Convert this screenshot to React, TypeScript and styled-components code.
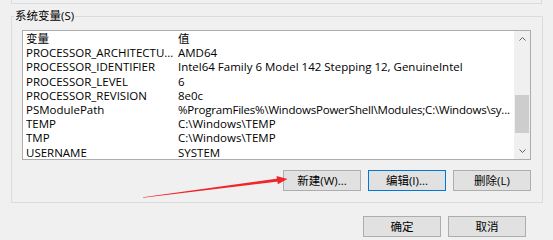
import React from 'react';
import styled, { createGlobalStyle } from 'styled-components';

const Global = createGlobalStyle`
  body {
    margin: 0;
    background: #f0f0f0;
    font-family: "Open Sans", "Noto Sans CJK SC", sans-serif;
    font-size: 11.5px;
    color: #000;
  }
`;

const Page = styled.div`
  position: relative;
  width: 553px;
  height: 240px;
  overflow: hidden;
  background: #f0f0f0;
`;

const UserBox = styled.div`
  box-sizing: border-box;
  margin-left: 11px;
  width: 531px;
  height: 4px;
  border: 1px solid #dcdcdc;
  border-top: none;
`;

const Group = styled.div`
  box-sizing: border-box;
  margin: 12px 0 0 11px;
  width: 532px;
  height: 187px;
  border: 1px solid #dcdcdc;
  padding: 0 11px 11px 10px;
  display: flex;
  flex-direction: column;
`;

const Legend = styled.div`
  align-self: flex-start;
  margin: -8px 0 0 -8px;
  padding: 0 1px;
  height: 14px;
  line-height: 14px;
  background: #f0f0f0;
`;

const ListBox = styled.div`
  box-sizing: border-box;
  margin-top: 7px;
  height: 130px;
  border: 1px solid #adadad;
  background: #fff;
  display: flex;
`;

const Rows = styled.div`
  flex: 1;
  padding: 1px 0 0 3px;
  overflow: hidden;
`;

const Row = styled.div`
  display: flex;
  height: 14.2px;
  line-height: 14.2px;
  white-space: nowrap;
`;

const Name = styled.span`
  width: 152px;
  flex: none;
  overflow: hidden;
`;

const Value = styled.span<{ $tight?: boolean }>`
  letter-spacing: ${p => (p.$tight ? '-0.2px' : 'normal')};
`;

const Scrollbar = styled.div`
  width: 16px;
  flex: none;
  background: #f0f0f0;
  display: flex;
  flex-direction: column;
`;

const Arrow = styled.div`
  height: 16px;
  display: flex;
  align-items: center;
  justify-content: center;
`;

const Track = styled.div`
  flex: 1;
  display: flex;
  flex-direction: column;
`;

const Thumb = styled.div`
  margin: 48px 1px 0 1px;
  height: 38px;
  background: #cdcdcd;
`;

const ButtonRow = styled.div<{ $mt: number; $pr?: number }>`
  display: flex;
  justify-content: flex-end;
  gap: 7px;
  margin-top: ${p => p.$mt}px;
  padding-right: ${p => p.$pr ?? 0}px;
`;

const Button = styled.div<{ $focused?: boolean }>`
  box-sizing: border-box;
  width: 78px;
  height: 21px;
  border: 1px solid ${p => (p.$focused ? '#0078d7' : '#adadad')};
  background: #e1e1e1;
  display: flex;
  align-items: center;
  justify-content: center;
  line-height: 1;
`;

const Overlay = styled.svg`
  position: absolute;
  left: 0;
  top: 0;
  pointer-events: none;
`;

const rows: [string, string][] = [
  ['变量', '值'],
  ['PROCESSOR_ARCHITECTU...', 'AMD64'],
  ['PROCESSOR_IDENTIFIER', 'Intel64 Family 6 Model 142 Stepping 12, GenuineIntel'],
  ['PROCESSOR_LEVEL', '6'],
  ['PROCESSOR_REVISION', '8e0c'],
  ['PSModulePath', '%ProgramFiles%\\WindowsPowerShell\\Modules;C:\\Windows\\sy...'],
  ['TEMP', 'C:\\Windows\\TEMP'],
  ['TMP', 'C:\\Windows\\TEMP'],
  ['USERNAME', 'SYSTEM'],
];

const Chevron = ({ up }: { up?: boolean }) => (
  <svg width="7" height="4" viewBox="0 0 7 4">
    <path d={up ? 'M0.5 3.5 L3.5 0.5 L6.5 3.5' : 'M0.5 0.5 L3.5 3.5 L6.5 0.5'} fill="none" stroke="#606060" strokeWidth="1" />
  </svg>
);

export default function App() {
  return (
    <Page>
      <Global />
      <UserBox />
      <Group>
        <Legend>系统变量(S)</Legend>
        <ListBox>
          <Rows>
            {rows.map(([n, v]) => (
              <Row key={n}>
                <Name>{n}</Name>
                <Value $tight={v.length > 55}>{v}</Value>
              </Row>
            ))}
          </Rows>
          <Scrollbar>
            <Arrow><Chevron up /></Arrow>
            <Track><Thumb /></Track>
            <Arrow><Chevron /></Arrow>
          </Scrollbar>
        </ListBox>
        <ButtonRow $mt={10}>
          <Button>新建(W)...</Button>
          <Button $focused>编辑(I)...</Button>
          <Button>删除(L)</Button>
        </ButtonRow>
      </Group>
      <ButtonRow $mt={13} $pr={27}>
        <Button>确定</Button>
        <Button>取消</Button>
      </ButtonRow>
      <Overlay width="553" height="240" viewBox="0 0 553 240">
        <polygon points="143,197.2 278,178.6 278.4,181.4 143,197.8" fill="#f0262a" />
        <polygon points="287.5,179 276.5,176 277.8,184.2" fill="#f0262a" />
      </Overlay>
    </Page>
  );
}
